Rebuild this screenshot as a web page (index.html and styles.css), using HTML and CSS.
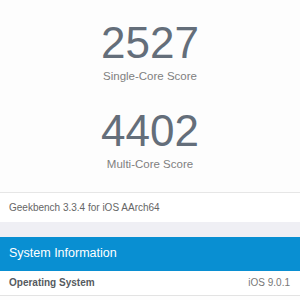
FILE: index.html
```html
<!DOCTYPE html>
<html lang="en">
<head>
    <meta charset="UTF-8">
    <meta name="viewport" content="width=device-width, initial-scale=1.0">
    <title>Geekbench Result</title>
    <link rel="stylesheet" href="styles.css">
</head>
<body>

<div class="scores">
    <div class="score">
        <div class="score-value">2527</div>
        <div class="score-label">Single-Core Score</div>
    </div>
    <div class="score">
        <div class="score-value">4402</div>
        <div class="score-label">Multi-Core Score</div>
    </div>
</div>

<div class="version">Geekbench 3.3.4 for iOS AArch64</div>

<div class="spacer"></div>

<div class="section-header">System Information</div>

<div class="info-row">
    <span class="info-name">Operating System</span>
    <span class="info-value">iOS 9.0.1</span>
</div>

</body>
</html>
```

FILE: styles.css
```css
body {
    font-family: "Helvetica Neue", "Liberation Sans", Arial, sans-serif;
    background-color: #fdfdfd;
    margin: 0;
    padding: 0;
}

.scores {
    padding-top: 21px;
    padding-bottom: 21px;
    border-bottom: 1px solid #e6e6e6;
    text-align: center;
}

.score + .score {
    margin-top: 26px;
}

.score-value {
    font-size: 44px;
    line-height: 44px;
    font-weight: 300;
    color: #646e7a;
}

.score-label {
    margin-top: 4px;
    font-size: 11.5px;
    line-height: 14px;
    color: #808080;
}

.version {
    background-color: #fff;
    padding: 9px 9px 8px;
    font-size: 10px;
    line-height: 12px;
    color: #666;
}

.spacer {
    height: 15px;
    background-color: #efeff4;
}

.section-header {
    background-color: #098fd2;
    padding: 9px 9px 10px;
    font-size: 12.5px;
    line-height: 15px;
    color: #fff;
}

.info-row {
    display: flex;
    justify-content: space-between;
    padding: 6px 10px 6px 9px;
    background-color: #fff;
    border-bottom: 1px solid #e3e3e3;
    font-size: 10px;
    line-height: 12px;
}

.info-name {
    font-weight: bold;
    color: #555a60;
}

.info-value {
    color: #777;
}
```
